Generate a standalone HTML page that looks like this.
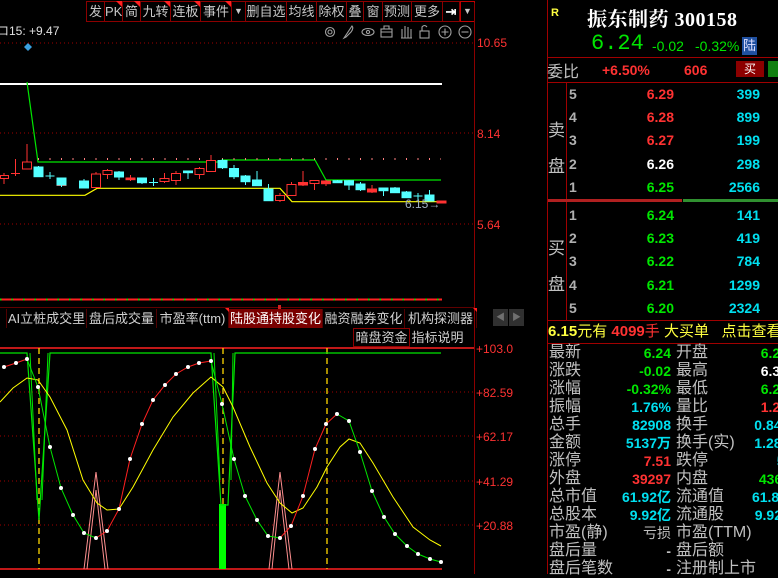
<!DOCTYPE html>
<html><head><meta charset="utf-8"><style>
*{margin:0;padding:0;box-sizing:border-box}
body{width:778px;height:574px;background:#000;overflow:hidden;position:relative;font-family:"Liberation Sans","Noto Sans CJK SC",sans-serif;color:#c8c8c8}
.a{position:absolute;white-space:nowrap}
.tb{position:absolute;top:1px;height:21px;border:1px solid #8c0000;font-size:13px;line-height:19px;text-align:center;color:#c8c8c8}
.tri{position:absolute;right:-1px;top:-1px;width:0;height:0;border-top:7px solid #ff2020;border-left:7px solid transparent}
.tab{position:absolute;top:309px;height:19px;font-size:13px;line-height:19px;color:#d0d0d0;text-align:center;border-right:1px solid #500000}
.ob{position:absolute;font-size:14px;font-weight:bold;line-height:16px}
.lb{position:absolute;left:549px;font-size:16px;line-height:18px;color:#c0c0c0}
.v{position:absolute;font-size:14px;line-height:18px;font-weight:bold;text-align:right}
.r{color:#ff3232}.g{color:#00e600}.c{color:#00e0f0}.w{color:#fff}.y{color:#ffff40}
</style></head><body>
<div class="tb" style="left:86px;width:19px">发</div>
<div class="tb" style="left:104px;width:19px">PK<i class="tri"></i></div>
<div class="tb" style="left:122px;width:19px">简<i class="tri"></i></div>
<div class="tb" style="left:140px;width:31px">九转<i class="tri"></i></div>
<div class="tb" style="left:170px;width:31px">连板<i class="tri"></i></div>
<div class="tb" style="left:200px;width:32px">事件<i class="tri"></i></div>
<div class="tb" style="left:231px;width:15px;font-size:9px">▼</div>
<div class="tb" style="left:245px;width:42px">删自选</div>
<div class="tb" style="left:286px;width:31px">均线</div>
<div class="tb" style="left:316px;width:31px">除权</div>
<div class="tb" style="left:346px;width:18px">叠</div>
<div class="tb" style="left:363px;width:20px">窗</div>
<div class="tb" style="left:382px;width:30px">预测</div>
<div class="tb" style="left:411px;width:32px">更多</div>
<div class="tb" style="left:442px;width:18px;color:#fff;font-weight:bold">⇥</div>
<div class="tb" style="left:460px;width:15px;font-size:9px;border-color:#c00000">▼</div>

<svg class="a" style="left:0;top:0" width="547" height="574">
<line x1="474.5" y1="3" x2="474.5" y2="574" stroke="#8c0000"/>
<g stroke="#a0a0a0" fill="none" stroke-width="1.1">
<circle cx="330" cy="32" r="4.5"/><circle cx="330" cy="32" r="2"/>
<path d="M344 38 L352 26 Q354 28 351 32 L346 37 Z"/>
<ellipse cx="368" cy="32" rx="6" ry="3.5"/><circle cx="368" cy="32" r="1.6"/>
<rect x="381" y="29" width="11" height="8"/><path d="M384 29 V26 H389 V29 M381 32 H392"/>
<path d="M402 38 V29 M405 38 V26 M408 38 V27 M411 38 V29 M401 38 H412"/>
<rect x="420" y="31" width="9" height="7"/><path d="M422 31 V27 Q424.5 24 427 27"/>
<circle cx="445" cy="32" r="6"/><path d="M441.5 32 H448.5 M445 28.5 V35.5"/>
<circle cx="465" cy="32" r="6"/><path d="M461.5 32 H468.5"/>
</g>
<text x="-3" y="35" font-size="12" fill="#e0e0e0" font-family="Liberation Sans">ロ15: +9.47</text>
<path d="M28 43 L32 47 L28 51 L24 47 Z" fill="#3aa0e0"/>
<g stroke="#a00000" stroke-dasharray="1 3">
<line x1="0" y1="43" x2="474" y2="43"/><line x1="0" y1="133" x2="474" y2="133"/><line x1="0" y1="224" x2="474" y2="224"/>
</g>
<g font-size="12" fill="#ff3232" font-family="Liberation Sans">
<text x="477" y="47">10.65</text><text x="477" y="138">8.14</text><text x="477" y="229">5.64</text>
</g>
<line x1="0" y1="84" x2="442" y2="84" stroke="#fff" stroke-width="2"/>
<polyline points="27,82 38,162 222,162 222,160 315,160 326,180 441,180" fill="none" stroke="#00e600" stroke-width="1.2"/>
<line x1="38" y1="159" x2="441" y2="159" stroke="#ff8080" stroke-dasharray="1 10.5" stroke-width="2"/>
<polyline points="0,195.3 85,195.3 97,188.3 280,188.3 292,201.7 441,201.7" fill="none" stroke="#ffff00" stroke-width="1.2"/>
<g stroke-width="1">
<g stroke="#ff3232" fill="#000">
<line x1="4" y1="173" x2="4" y2="184"/><rect x="0.5" y="175.5" width="8" height="3"/>
<line x1="15.5" y1="159" x2="15.5" y2="176"/><line x1="11" y1="173.5" x2="20" y2="173.5"/>
<line x1="27" y1="144" x2="27" y2="162"/><rect x="22.5" y="162" width="9" height="7"/>
<line x1="61.5" y1="179" x2="61.5" y2="187"/><rect x="57" y="180.5" width="9" height="5"/>
<line x1="96" y1="172" x2="96" y2="174"/><rect x="91.5" y="174" width="9" height="13.5"/>
<line x1="107.5" y1="169" x2="107.5" y2="179"/><rect x="103" y="170.5" width="9" height="4"/>
<line x1="130.5" y1="175" x2="130.5" y2="181"/><rect x="126" y="178" width="9" height="1.7" fill="#ff3232"/>
<line x1="164.5" y1="173" x2="164.5" y2="183"/><rect x="160" y="178.5" width="9" height="3"/>
<line x1="176" y1="171" x2="176" y2="185"/><rect x="171.5" y="173.5" width="9" height="7"/>
<line x1="199.5" y1="167" x2="199.5" y2="179"/><rect x="195" y="168.5" width="9" height="6"/>
<line x1="211" y1="155" x2="211" y2="171"/><rect x="206.5" y="160.5" width="9" height="11"/>
<line x1="280" y1="193" x2="280" y2="202"/><rect x="275.5" y="195.5" width="9" height="5"/>
<line x1="291.5" y1="182" x2="291.5" y2="195"/><rect x="287" y="184.5" width="9" height="11"/>
<line x1="303" y1="171" x2="303" y2="186"/><rect x="298.5" y="182.5" width="9" height="2.5" fill="#ff3232"/>
<line x1="314.5" y1="180" x2="314.5" y2="190"/><rect x="310" y="180.5" width="9" height="3"/>
<line x1="326" y1="180" x2="326" y2="186"/><rect x="321.5" y="181" width="9" height="2.7" fill="#ff3232"/>
<line x1="372" y1="185" x2="372" y2="193"/><rect x="367.5" y="189" width="9" height="3" fill="#ff3232"/>
<rect x="437" y="201" width="9" height="2" fill="#ff3232"/>
</g>
<g stroke="#54ffff" fill="#54ffff">
<line x1="38.5" y1="166" x2="38.5" y2="177"/><rect x="34" y="167" width="9" height="9.7"/>
<line x1="50" y1="172" x2="50" y2="179"/><line x1="45.5" y1="176" x2="54.5" y2="176"/>
<line x1="61.5" y1="178" x2="61.5" y2="187"/>
<rect x="57" y="178" width="9" height="7" />
<line x1="84" y1="179" x2="84" y2="188"/><rect x="79.5" y="181" width="9" height="7"/>
<line x1="119" y1="171" x2="119" y2="180"/><rect x="114.5" y="172" width="9" height="5"/>
<line x1="142" y1="178" x2="142" y2="184"/><rect x="137.5" y="178" width="9" height="4.7"/>
<line x1="153.5" y1="178" x2="153.5" y2="186"/><line x1="149" y1="182.5" x2="158" y2="182.5"/>
<line x1="188" y1="171" x2="188" y2="179"/><rect x="183.5" y="171" width="9" height="1.7"/>
<line x1="222.5" y1="159" x2="222.5" y2="169"/><rect x="218" y="160.5" width="9" height="7.2"/>
<line x1="234" y1="165" x2="234" y2="179"/><rect x="229.5" y="168.5" width="9" height="8.2"/>
<line x1="245.5" y1="175" x2="245.5" y2="185"/><rect x="241" y="176" width="9" height="5.7"/>
<line x1="257" y1="171" x2="257" y2="186"/><rect x="252.5" y="180" width="9" height="5.7"/>
<line x1="268.5" y1="184" x2="268.5" y2="200"/><rect x="264" y="189" width="9" height="11.7"/>
<line x1="337.5" y1="180" x2="337.5" y2="183"/><rect x="333" y="180.7" width="9" height="2"/>
<line x1="349" y1="180" x2="349" y2="190"/><rect x="344.5" y="180.7" width="9" height="4.3"/>
<line x1="360.5" y1="182" x2="360.5" y2="191"/><rect x="356" y="184" width="9" height="5.7"/>
<line x1="383.5" y1="188" x2="383.5" y2="196"/><rect x="379" y="188" width="9" height="2.7"/>
<line x1="395" y1="187" x2="395" y2="193"/><rect x="390.5" y="188" width="9" height="4.7"/>
<line x1="406.5" y1="191" x2="406.5" y2="198"/><rect x="402" y="192" width="9" height="5.7"/>
<line x1="418" y1="193" x2="418" y2="200"/><line x1="413.5" y1="196" x2="422.5" y2="196"/>
<line x1="429.5" y1="190" x2="429.5" y2="201"/><rect x="425" y="195" width="9" height="6"/>
</g>
</g>
<text x="405" y="208" font-size="12" fill="#a0b0c0" font-family="Liberation Sans">6.15→</text>
<line x1="0" y1="299.5" x2="442" y2="299.5" stroke="#ff2020" stroke-width="2"/>
<line x1="0" y1="299.5" x2="442" y2="299.5" stroke="#00e600" stroke-width="2" stroke-dasharray="1.5 10"/>
<line x1="0" y1="307.5" x2="474" y2="307.5" stroke="#600000"/>
<rect x="278" y="305" width="3" height="5" fill="#d02020"/>
<line x1="0" y1="348" x2="474" y2="348" stroke="#ff2020" stroke-width="1.5"/>
<line x1="0" y1="569" x2="442" y2="569" stroke="#ff2020" stroke-width="1.5"/>
<g stroke="#a00000" stroke-dasharray="1 3">
<line x1="0" y1="392" x2="474" y2="392"/><line x1="0" y1="436" x2="474" y2="436"/><line x1="0" y1="481" x2="474" y2="481"/><line x1="0" y1="525" x2="474" y2="525"/>
</g>
<g font-size="12" fill="#ff3232" font-family="Liberation Sans">
<text x="476" y="353">+103.0</text><text x="476" y="397">+82.59</text><text x="476" y="441">+62.17</text><text x="476" y="486">+41.29</text><text x="476" y="530">+20.88</text>
</g>
<g stroke="#ffd800" stroke-dasharray="6 4" stroke-width="1.3">
<line x1="39" y1="348" x2="39" y2="569"/><line x1="223" y1="348" x2="223" y2="569"/><line x1="327" y1="348" x2="327" y2="569"/>
</g>
<rect x="219" y="504" width="7" height="65" fill="#00ff00"/>
<path d="M0 353 H27 L39 520 L50 353 H211 L221 505 L228 505 L235 353 H441" fill="none" stroke="#00e600" stroke-width="1.2"/>
<path d="M30 353 L37 500 M42 500 L48 353 M214 353 L220 480 M231 480 L233 353" fill="none" stroke="#00e600" stroke-width="1"/>
<g fill="none" stroke="#ff9090" stroke-width="1">
<path d="M84 569 L96 472 L108 569 M87 569 L96 490 L105 569"/>
<path d="M269 569 L280 472 L292 569 M272 569 L280 490 L289 569"/>
</g>
<polyline fill="none" stroke="#ffff00" stroke-width="1" points="0,402 13,388 27,378 38,380 50,397 67,430 83,480 97,503 107,510 119,509 133,487 153,450 173,417 193,393 211,377 223,387 233,407 250,447 267,483 280,503 292,513 303,508 317,487 327,467 340,447 349,439 360,443 373,463 393,497 413,527 430,540 441,546"/>
<polyline fill="none" stroke="#ff2020" stroke-width="1" points="4,367 16,363 27,359"/>
<polyline fill="none" stroke="#00e600" stroke-width="1" points="27,359 38,387 50,447 61,488 73,515 84,533 96,538"/>
<polyline fill="none" stroke="#ff2020" stroke-width="1" points="96,538 107,531 119,509 130,459 142,424 153,400 165,385 176,374 188,367 199,363 211,361"/>
<polyline fill="none" stroke="#00e600" stroke-width="1" points="211,361 222,404 234,459 245,496 257,520 268,536 280,538"/>
<polyline fill="none" stroke="#ff2020" stroke-width="1" points="280,538 291,526 303,496 315,449 326,424 337,414"/>
<polyline fill="none" stroke="#00e600" stroke-width="1" points="337,414 349,421 360,452 372,491 384,517 395,534 407,546 418,554 430,559 441,562"/>
<g fill="#fff">
<circle cx="4" cy="367" r="2"/><circle cx="16" cy="363" r="2"/><circle cx="27" cy="359" r="2"/><circle cx="38" cy="387" r="2"/><circle cx="50" cy="447" r="2"/><circle cx="61" cy="488" r="2"/><circle cx="73" cy="515" r="2"/><circle cx="84" cy="533" r="2"/><circle cx="96" cy="538" r="2"/><circle cx="107" cy="531" r="2"/><circle cx="119" cy="509" r="2"/><circle cx="130" cy="459" r="2"/><circle cx="142" cy="424" r="2"/><circle cx="153" cy="400" r="2"/><circle cx="165" cy="385" r="2"/><circle cx="176" cy="374" r="2"/><circle cx="188" cy="367" r="2"/><circle cx="199" cy="363" r="2"/><circle cx="211" cy="361" r="2"/><circle cx="222" cy="404" r="2"/><circle cx="234" cy="459" r="2"/><circle cx="245" cy="496" r="2"/><circle cx="257" cy="520" r="2"/><circle cx="268" cy="536" r="2"/><circle cx="280" cy="538" r="2"/><circle cx="291" cy="526" r="2"/><circle cx="303" cy="496" r="2"/><circle cx="315" cy="449" r="2"/><circle cx="326" cy="424" r="2"/><circle cx="337" cy="414" r="2"/><circle cx="349" cy="421" r="2"/><circle cx="360" cy="452" r="2"/><circle cx="372" cy="491" r="2"/><circle cx="384" cy="517" r="2"/><circle cx="395" cy="534" r="2"/><circle cx="407" cy="546" r="2"/><circle cx="418" cy="554" r="2"/><circle cx="430" cy="559" r="2"/><circle cx="441" cy="562" r="2"/>
</g>
</svg>

<div class="tab" style="left:6px;width:81px;border-left:1px solid #500000">AI立桩成交里</div>
<div class="tab" style="left:87px;width:70px">盘后成交量</div>
<div class="tab" style="left:157px;width:72px">市盈率(ttm)<i class="tri" style="border-top-width:4px;border-left-width:4px"></i></div>
<div class="tab" style="left:229px;width:94px;background:#7a0000;color:#fff">陆股通持股变化</div>
<div class="tab" style="left:323px;width:82px">融资融券变化</div>
<div class="tab" style="left:405px;width:72px">机构探测器<i class="tri" style="border-top-width:4px;border-left-width:4px"></i></div>
<div class="a" style="left:493px;top:309px;width:15px;height:17px;background:#303030;color:#707070;font-size:9px;line-height:17px;text-align:center">◀</div>
<div class="a" style="left:509px;top:309px;width:15px;height:17px;background:#303030;color:#707070;font-size:9px;line-height:17px;text-align:center">▶</div>
<div class="a" style="left:353px;top:328px;width:57px;height:19px;border:1px solid #8c0000;font-size:13px;line-height:17px;text-align:center;color:#d0d0d0">暗盘资金</div>
<div class="a" style="left:410px;top:328px;width:55px;height:19px;font-size:13px;line-height:19px;text-align:center;color:#d0d0d0">指标说明</div>

<div class="a" style="left:547px;top:0;width:1px;height:574px;background:#a00000"></div>
<div class="a" style="left:566px;top:82px;width:1px;height:238px;background:#a00000"></div>
<div class="a y" style="left:551px;top:7px;font-size:11px;font-weight:bold">R</div>
<div class="a w" style="left:587px;top:3px;font-size:20px;font-weight:bold;font-family:'Liberation Serif','Noto Serif CJK SC',serif;letter-spacing:0.5px">振东制药 300158</div>
<div class="a g" style="left:591px;top:31px;font-size:22px;font-family:'Liberation Mono',monospace">6.24</div>
<div class="a g" style="left:652px;top:38px;font-size:14px">-0.02</div>
<div class="a g" style="left:695px;top:38px;font-size:14px">-0.32%</div>
<div class="a" style="left:742px;top:37px;width:15px;height:18px;background:#2050a0;color:#e0e0ff;font-size:13px;line-height:18px;text-align:center">陆</div>
<div class="a" style="left:547px;top:57px;width:231px;height:1px;background:#a00000"></div>
<div class="a" style="left:547px;top:58px;font-size:16px;color:#c0c0c0">委比</div>
<div class="ob r" style="left:602px;top:62px">+6.50%</div>
<div class="ob r" style="left:684px;top:62px">606</div>
<div class="a" style="left:736px;top:61px;width:28px;height:16px;background:#8c0000;color:#fff;font-size:12px;text-align:center;line-height:16px">买</div>
<div class="a" style="left:768px;top:61px;width:12px;height:16px;background:#108010"></div>
<div class="a" style="left:547px;top:82px;width:231px;height:1px;background:#a00000"></div>
<div class="a" style="left:548px;top:113px;font-size:17px;color:#c0c0c0;line-height:36px;width:18px">卖<br>盘</div>
<div class="a" style="left:548px;top:231px;font-size:17px;color:#c0c0c0;line-height:36px;width:18px">买<br>盘</div>
<div class="a" style="left:548px;top:199px;width:134px;height:3px;background:#b02020"></div>
<div class="a" style="left:683px;top:199px;width:95px;height:3px;background:#309030"></div>

<div class="ob" style="left:569px;top:86px;color:#b0b0b0">5</div><div class="ob r" style="left:618px;top:86px;width:56px;text-align:right">6.29</div><div class="ob c" style="left:700px;top:86px;width:60px;text-align:right">399</div>
<div class="ob" style="left:569px;top:109px;color:#b0b0b0">4</div><div class="ob r" style="left:618px;top:109px;width:56px;text-align:right">6.28</div><div class="ob c" style="left:700px;top:109px;width:60px;text-align:right">899</div>
<div class="ob" style="left:569px;top:132px;color:#b0b0b0">3</div><div class="ob r" style="left:618px;top:132px;width:56px;text-align:right">6.27</div><div class="ob c" style="left:700px;top:132px;width:60px;text-align:right">199</div>
<div class="ob" style="left:569px;top:156px;color:#b0b0b0">2</div><div class="ob w" style="left:618px;top:156px;width:56px;text-align:right">6.26</div><div class="ob c" style="left:700px;top:156px;width:60px;text-align:right">298</div>
<div class="ob" style="left:569px;top:179px;color:#b0b0b0">1</div><div class="ob g" style="left:618px;top:179px;width:56px;text-align:right">6.25</div><div class="ob c" style="left:700px;top:179px;width:60px;text-align:right">2566</div>

<div class="ob" style="left:569px;top:207px;color:#b0b0b0">1</div><div class="ob g" style="left:618px;top:207px;width:56px;text-align:right">6.24</div><div class="ob c" style="left:700px;top:207px;width:60px;text-align:right">141</div>
<div class="ob" style="left:569px;top:230px;color:#b0b0b0">2</div><div class="ob g" style="left:618px;top:230px;width:56px;text-align:right">6.23</div><div class="ob c" style="left:700px;top:230px;width:60px;text-align:right">419</div>
<div class="ob" style="left:569px;top:253px;color:#b0b0b0">3</div><div class="ob g" style="left:618px;top:253px;width:56px;text-align:right">6.22</div><div class="ob c" style="left:700px;top:253px;width:60px;text-align:right">784</div>
<div class="ob" style="left:569px;top:277px;color:#b0b0b0">4</div><div class="ob g" style="left:618px;top:277px;width:56px;text-align:right">6.21</div><div class="ob c" style="left:700px;top:277px;width:60px;text-align:right">1299</div>
<div class="ob" style="left:569px;top:300px;color:#b0b0b0">5</div><div class="ob g" style="left:618px;top:300px;width:56px;text-align:right">6.20</div><div class="ob c" style="left:700px;top:300px;width:60px;text-align:right">2324</div>

<div class="a" style="left:547px;top:320px;width:231px;height:1px;background:#a00000"></div>
<div class="a" style="left:548px;top:323px;font-size:15px;line-height:18px"><span class="y"><b>6.15</b>元有</span> <span class="r"><b>4099</b>手</span> <span class="y">大买单</span> &nbsp;&nbsp;<span class="y">点击查看</span></div>
<div class="a" style="left:547px;top:343px;width:231px;height:1px;background:#a00000"></div>

<div class="lb" style="top:344px">最新</div><div class="v g" style="left:600px;top:344px;width:71px">6.24</div><div class="lb" style="left:676px;top:344px">开盘</div><div class="v g" style="left:700px;top:344px;width:88px">6.26</div>
<div class="lb" style="top:362px">涨跌</div><div class="v g" style="left:600px;top:362px;width:71px">-0.02</div><div class="lb" style="left:676px;top:362px">最高</div><div class="v w" style="left:700px;top:362px;width:88px">6.31</div>
<div class="lb" style="top:380px">涨幅</div><div class="v g" style="left:590px;top:380px;width:81px">-0.32%</div><div class="lb" style="left:676px;top:380px">最低</div><div class="v g" style="left:700px;top:380px;width:88px">6.20</div>
<div class="lb" style="top:398px">振幅</div><div class="v c" style="left:600px;top:398px;width:71px">1.76%</div><div class="lb" style="left:676px;top:398px">量比</div><div class="v r" style="left:700px;top:398px;width:88px">1.26</div>
<div class="lb" style="top:416px">总手</div><div class="v c" style="left:600px;top:416px;width:71px">82908</div><div class="lb" style="left:676px;top:416px">换手</div><div class="v c" style="left:700px;top:416px;width:94px">0.84%</div>
<div class="lb" style="top:434px">金额</div><div class="v c" style="left:590px;top:434px;width:81px">5137万</div><div class="lb" style="left:676px;top:434px">换手(实)</div><div class="v c" style="left:700px;top:434px;width:94px">1.28%</div>
<div class="lb" style="top:452px">涨停</div><div class="v r" style="left:600px;top:452px;width:71px">7.51</div><div class="lb" style="left:676px;top:452px">跌停</div><div class="v c" style="left:700px;top:452px;width:104px">5.01</div>
<div class="lb" style="top:470px">外盘</div><div class="v r" style="left:600px;top:470px;width:71px">39297</div><div class="lb" style="left:676px;top:470px">内盘</div><div class="v g" style="left:700px;top:470px;width:97px">43611</div>
<div class="lb" style="top:488px">总市值</div><div class="v c" style="left:590px;top:488px;width:81px">61.92亿</div><div class="lb" style="left:676px;top:488px">流通值</div><div class="v c" style="left:700px;top:488px;width:101px">61.88亿</div>
<div class="lb" style="top:506px">总股本</div><div class="v c" style="left:590px;top:506px;width:81px">9.92亿</div><div class="lb" style="left:676px;top:506px">流通股</div><div class="v c" style="left:700px;top:506px;width:96px">9.92亿</div>
<div class="lb" style="top:524px">市盈(静)</div><div class="v" style="left:600px;top:524px;width:71px;color:#c0c0c0;font-weight:normal">亏损</div><div class="lb" style="left:676px;top:524px">市盈(TTM)</div><div class="v" style="left:700px;top:524px;width:110px;color:#c0c0c0;font-weight:normal">亏损</div>
<div class="lb" style="top:542px">盘后量</div><div class="v" style="left:600px;top:542px;width:71px;color:#c0c0c0">-</div><div class="lb" style="left:676px;top:542px">盘后额</div>
<div class="lb" style="top:560px">盘后笔数</div><div class="v" style="left:600px;top:560px;width:71px;color:#c0c0c0">-</div><div class="lb" style="left:676px;top:560px">注册制上市</div>
</body></html>
